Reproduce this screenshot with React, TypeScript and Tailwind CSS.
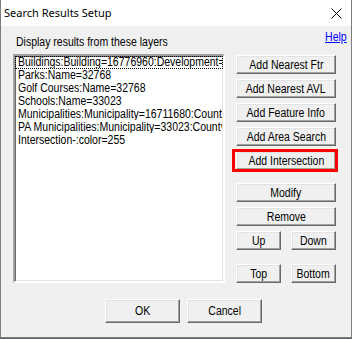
import React from "react";

const font = '"Liberation Sans", Arial, sans-serif';

const btn =
  "flex items-center justify-center bg-[#f0f0f0] border border-t-white border-l-white border-r-[#696969] border-b-[#696969] shadow-[inset_-1px_-1px_0_#a0a0a0,inset_1px_1px_0_#e3e3e3] text-[12px] leading-none text-black overflow-visible";

const items = [
  "Buildings:Building=16776960:Development=",
  "Parks:Name=32768",
  "Golf Courses:Name=32768",
  "Schools:Name=33023",
  "Municipalities:Municipality=16711680:County",
  "PA Municipalities:Municipality=33023:County",
  "Intersection-:color=255",
];

function L({ children }: { children: React.ReactNode }) {
  return <span className="inline-block origin-left scale-x-[0.875] whitespace-nowrap">{children}</span>;
}

function C({ children }: { children: React.ReactNode }) {
  return <span className="inline-block origin-center scale-x-[0.875] whitespace-nowrap">{children}</span>;
}

function Btn({ cls, children }: { cls: string; children: React.ReactNode }) {
  return (
    <div className={btn + " " + cls}>
      <C>{children}</C>
    </div>
  );
}

export default function App() {
  return (
    <div className="w-[352px] h-[339px] bg-[#5c6670]" style={{ fontFamily: font }}>
      <div className="w-[352px] h-[338px] flex flex-col border-l border-r border-b border-[#7d7d7d] bg-[#f0f0f0]">
        {/* Title bar */}
        <div className="h-[26px] bg-white flex items-center justify-between pl-[3px] pr-[9px]">
          <span className="text-[11px] text-black" style={{ fontFamily: '"Noto Sans", "Open Sans", sans-serif' }}>
            Search Results Setup
          </span>
          <svg width="11" height="11" viewBox="0 0 11 11">
            <path d="M0.5 0.5 L10.5 10.5 M10.5 0.5 L0.5 10.5" stroke="#000" strokeWidth="1" />
          </svg>
        </div>
        {/* Body */}
        <div className="flex flex-row pl-[12px]">
          <div className="flex flex-col pt-[10px]">
            <div className="text-[12px] leading-[13px] text-black pl-[3px] h-[18px] w-[212px] overflow-hidden">
              <L>Display results from these layers</L>
            </div>
            <div className="w-[212px] h-[229px] bg-white border-2 border-t-[#a0a0a0] border-l-[#a0a0a0] border-r-white border-b-white shadow-[inset_1px_1px_0_#696969,inset_-1px_-1px_0_#e3e3e3] overflow-hidden">
              <div className="flex flex-col">
                {items.map((t, i) => (
                  <div
                    key={i}
                    className={
                      "h-[13px] text-[12px] leading-[11px] whitespace-nowrap overflow-hidden pl-[2px] border border-dotted " +
                      (i === 0 ? "border-black" : "border-transparent")
                    }
                  >
                    <L>{t}</L>
                  </div>
                ))}
              </div>
            </div>
          </div>
          <div className="flex flex-col ml-[11px] w-[111px] pt-[4px]">
            <div className="flex justify-end h-[25px]">
              <span className="text-[12px] leading-[14px] text-[#0000ff] underline inline-block origin-right scale-x-[0.875]">Help</span>
            </div>
            <div className="flex flex-col w-[100px] gap-[5px]">
              <Btn cls="h-[19px]">Add Nearest Ftr</Btn>
              <Btn cls="h-[19px]">Add Nearest AVL</Btn>
              <Btn cls="h-[19px]">Add Feature Info</Btn>
              <Btn cls="h-[19px]">Add Area Search</Btn>
              <div className="relative">
                <Btn cls="h-[19px]">Add Intersection</Btn>
                <div className="absolute left-[-4px] top-[-2px] w-[106px] h-[23px] border-[3px] border-[#ff0000]" />
              </div>
              <Btn cls="h-[19px] mt-[8px]">Modify</Btn>
              <Btn cls="h-[19px]">Remove</Btn>
              <div className="flex justify-between">
                <Btn cls="h-[19px] w-[45px]">Up</Btn>
                <Btn cls="h-[19px] w-[45px]">Down</Btn>
              </div>
              <div className="flex justify-between mt-[9px]">
                <Btn cls="h-[19px] w-[45px]">Top</Btn>
                <Btn cls="h-[19px] w-[45px]">Bottom</Btn>
              </div>
            </div>
          </div>
        </div>
        {/* Footer */}
        <div className="flex flex-row pl-[104px] gap-[7px] mt-[16px]">
          <Btn cls="w-[75px] h-[24px]">OK</Btn>
          <Btn cls="w-[75px] h-[24px]">Cancel</Btn>
        </div>
      </div>
    </div>
  );
}
